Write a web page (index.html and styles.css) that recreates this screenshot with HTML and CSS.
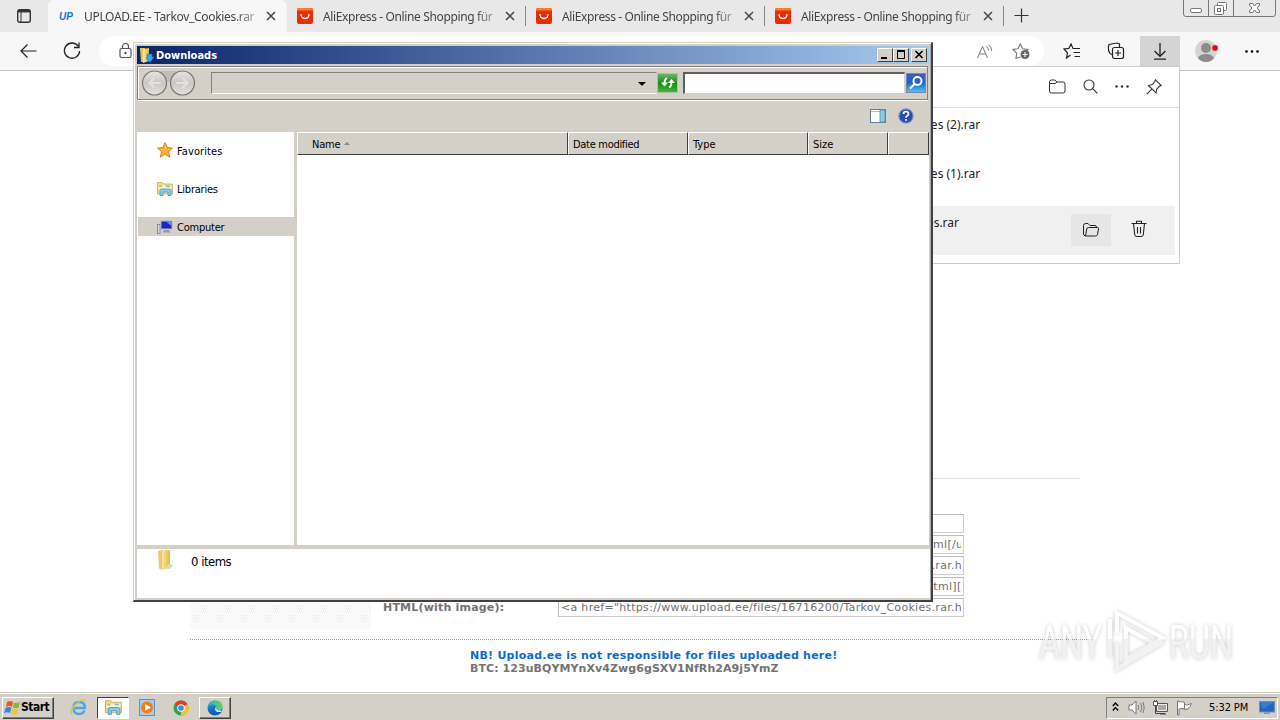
FILE: index.html
```html
<!DOCTYPE html>
<html lang="en">
<head>
  <meta charset="UTF-8">
  <title>UPLOAD.EE - Tarkov_Cookies.rar</title>
  <link rel="stylesheet" href="styles.css">
</head>
<body>

  <!-- shared icons -->
  <svg class="defs" width="0" height="0">
    <defs>
      <linearGradient id="gold" x1="0" x2="1"><stop offset="0" stop-color="#f8e89c"/><stop offset="1" stop-color="#e2b93c"/></linearGradient>
      <linearGradient id="edgeBlue" x1="0" y1="0" x2="0" y2="1"><stop offset="0" stop-color="#24a9e0"/><stop offset="1" stop-color="#0b50a4"/></linearGradient>
      <linearGradient id="edgeGreen" x1="0" x2="1"><stop offset="0" stop-color="#28a8dc"/><stop offset="1" stop-color="#65d84e"/></linearGradient>
      <symbol id="close" viewBox="0 0 10 10"><path d="M1 1l8 8M9 1l-8 8" stroke="#444" stroke-width="1.5" fill="none"/></symbol>
      <symbol id="ali" viewBox="0 0 16 16">
        <rect width="16" height="16" rx="2" fill="#e62e04"/>
        <path d="M0 2.500V2q0-2 2-2h12q2 0 2 2v.5z" fill="#f9801c"/>
        <path d="M4 6q0 4.500 4 4.500T12 6" stroke="#fff" stroke-width="1.300" fill="none"/>
      </symbol>
      <symbol id="library" viewBox="0 0 16 16">
        <path d="M.5 1.500h5L7 3h8.500v10H.5z" fill="#f0d98a" stroke="#c9ae5c" stroke-width=".8"/>
        <path d="M1.500 4.500h13v4h-13z" fill="#fbf3c4"/>
        <path d="M2 4.500h3V6H2z" fill="#8cc77a"/><path d="M9 4.500h4V6H9z" fill="#7db8da"/>
        <path d="M3 14.500V9.500Q3 8 4.500 8h8Q14 8 14 9.500v5h-3V11H6v3.500z" fill="#8accea" stroke="#4d96bf" stroke-width=".8"/>
      </symbol>
    </defs>
  </svg>

  <div class="browser">
    <div class="tabstrip">
      <div class="tab-actions">
        <svg width="14" height="14" viewBox="0 0 14 14" fill="none" stroke="#333" stroke-width="1.400"><rect x=".7" y=".7" width="12.600" height="12.600" rx="2"/><path d="M1 2.200h12" stroke-width="2.500"/><path d="M4 3v10" stroke-width="1"/></svg>
      </div>
      <div class="tab active">
        <span class="up-logo">UP</span>
        <span class="tab-title first">UPLOAD.EE - Tarkov_Cookies.rar</span>
        <svg class="tab-close"><use href="#close"/></svg>
      </div>
      <div class="tab">
        <svg class="favicon"><use href="#ali"/></svg>
        <span class="tab-title">AliExpress - Online Shopping für</span>
        <svg class="tab-close"><use href="#close"/></svg>
      </div>
      <div class="tab">
        <svg class="favicon"><use href="#ali"/></svg>
        <span class="tab-title">AliExpress - Online Shopping für</span>
        <svg class="tab-close"><use href="#close"/></svg>
      </div>
      <div class="tab">
        <svg class="favicon"><use href="#ali"/></svg>
        <span class="tab-title">AliExpress - Online Shopping für</span>
        <svg class="tab-close"><use href="#close"/></svg>
      </div>
      <svg class="new-tab" width="15" height="15" viewBox="0 0 15 15"><path d="M7.500 0.500v14M.5 7.500h14" stroke="#333" stroke-width="1.200"/></svg>
      <svg class="win-controls" width="94" height="17" viewBox="0 0 94 17" fill="none" stroke="#777">
        <path d="M.5 0v14q0 2.500 2.500 2.500h87q2.500 0 2.500-2.500V0M25.500 0v16M50.500 0v16"/>
        <rect x="7.500" y="8.500" width="11" height="4" rx="1.500" fill="#fff"/>
        <rect x="34.500" y="2.500" width="9" height="8" rx="1" fill="#fff"/><rect x="31.500" y="5.500" width="9" height="9" rx="1" fill="#fff"/><rect x="34.500" y="8.500" width="3" height="3"/>
        <path d="M66.500 3.500h3l2 2.500 2-2.500h3v1.500L74 8l2.500 3v1.500h-3l-2-2.500-2 2.500h-3V11L69 8l-2.500-3z" fill="#fff"/>
      </svg>
    </div>

    <div class="toolbar">
      <svg class="back" width="17" height="14" viewBox="0 0 17 14" fill="none" stroke="#222" stroke-width="1.200"><path d="M16.500 7H1M7.500.5L1 7l6.500 6.500"/></svg>
      <svg class="reload" width="18" height="18" viewBox="0 0 18 18" fill="none" stroke="#222" stroke-width="1.300"><path d="M15.200 4.200A7.600 7.600 0 1 0 16.600 9M16 .5v5h-5"/></svg>
      <div class="address">
        <svg width="13" height="16" viewBox="0 0 13 16" fill="none" stroke="#555" stroke-width="1.200"><rect x="1" y="5.500" width="11" height="9" rx="1.500"/><path d="M3.500 5.500V3.500a3 3 0 0 1 6 0v2"/><circle cx="6.500" cy="10" r=".6" fill="#555"/></svg>
        <span class="address-gap"></span>
        <svg width="17" height="15" viewBox="0 0 17 15" fill="none" stroke="#777"><path d="M.5 14L5.500 2.500 10.500 14M2.500 10h6M9.500 2.500q2 1.500 2 4M11.500.8q3.200 2.200 3.200 6"/></svg>
        <svg class="fav-add" width="18" height="18" viewBox="0 0 18 18" fill="none" stroke="#777" stroke-width="1.100"><path d="M8.500 15L4 16.200l.7-5L1 7.500l5-.8L8.300 2l2.400 4.700 5.300.8-2 2"/><circle cx="13" cy="12.500" r="4.500" fill="#666" stroke="none"/><path d="M13 10v5M10.500 12.500h5" stroke="#fff"/></svg>
      </div>
      <div class="tool"><svg width="18" height="16" viewBox="0 0 18 16" fill="none" stroke="#222" stroke-width="1.200"><path d="M7.500 12L3.500 15l1-5L1 6l4.800-.6L8 1l2 4.500h7M10.500 9.500h6.500M11.500 13.500h5.500"/></svg></div>
      <div class="tool"><svg width="18" height="18" viewBox="0 0 18 18" fill="none" stroke="#222" stroke-width="1.200"><path d="M5 12.500q-3-1-3.500-4.500Q1 5 2 2.500L10 1l2.500 1v3"/><rect x="5.500" y="5.500" width="11" height="11" rx="2"/><path d="M11 8v6M8 11h6"/></svg></div>
      <div class="tool pressed"><svg width="14" height="17" viewBox="0 0 14 17" fill="none" stroke="#222" stroke-width="1.300"><path d="M7 0v13M1.500 8L7 13.300 12.500 8M1 16.200h12"/></svg></div>
      <svg class="avatar" width="24" height="24" viewBox="0 0 24 24"><circle cx="11" cy="12" r="11" fill="#d6d4d2"/><circle cx="11" cy="9" r="5" fill="#8c8c8c"/><path d="M3 19q2-4 8-4t8 4q-3 4-8 4t-8-4z" fill="#8c8c8c"/><circle cx="20" cy="9" r="3.200" fill="#d90b16" stroke="#f4f4f4" stroke-width=".5"/></svg>
      <svg class="more" width="14" height="3" viewBox="0 0 14 3"><circle cx="1.500" cy="1.500" r="1.300"/><circle cx="7" cy="1.500" r="1.300"/><circle cx="12.500" cy="1.500" r="1.300"/></svg>
    </div>

    <div class="page">
      <div class="content">
        <div class="rule"></div>
        <div class="links">
          <div class="pattern">
            <svg width="181" height="30"><defs><pattern id="dots" width="24" height="30" patternUnits="userSpaceOnUse"><path d="M3 16.500h6M4 18.500h6M3 20.500h6M4 22.500h6M11 7.500h6M12 9.500h6M11 11.500h6M12 13.500h6" stroke="#e6e6e6" stroke-dasharray="1 1"/></pattern></defs><rect width="181" height="30" fill="url(#dots)"/></svg>
          </div>
          <div class="link-label">HTML(with image):</div>
          <div class="link-fields">
            <div class="field"></div>
            <div class="field"><span>[url]https://www.upload.ee/files/16716200/Tarkov_Cookies.rar.html[/url]</span></div>
            <div class="field"><span>&lt;a href="https://www.upload.ee/files/16716200/Tarkov_Cookies.rar.html</span></div>
            <div class="field"><span>[url=https://www.upload.ee/files/16716200/Tarkov_Cookies.rar.html][img]</span></div>
            <div class="field"><span>&lt;a href="https://www.upload.ee/files/16716200/Tarkov_Cookies.rar.html</span></div>
          </div>
        </div>
        <div class="footer">
          <div class="notice">NB! Upload.ee is not responsible for files uploaded here!</div>
          <div class="btc">BTC: 123uBQYMYnXv4Zwg6gSXV1NfRh2A9j5YmZ</div>
        </div>
      </div>
    </div>
  </div>

  <div class="flyout">
    <div class="flyout-header">
      <svg width="17" height="15" viewBox="0 0 17 15" fill="none" stroke="#333"><path d="M.5 12V3q0-2 2-2h3.500l2 2H14q2 0 2 2v7q0 2-2 2H2.500q-2 0-2-2zM.5 4.500H6L8 3"/></svg>
      <svg width="15" height="15" viewBox="0 0 15 15" fill="none" stroke="#333" stroke-width="1.100"><circle cx="6" cy="6" r="5"/><path d="M9.700 9.700l4.600 4.600"/></svg>
      <svg width="14" height="3" viewBox="0 0 14 3" fill="#333"><circle cx="1.500" cy="1.500" r="1.200"/><circle cx="7" cy="1.500" r="1.200"/><circle cx="12.500" cy="1.500" r="1.200"/></svg>
      <svg width="16" height="16" viewBox="0 0 16 16" fill="none" stroke="#333" stroke-width="1.100"><path d="M9.500.8l5.700 5.700-1.700.8-2.700 2.700-.8 4-7.500-7.500 4-1L8.500 3zM5.800 10.200L.8 15.200"/></svg>
    </div>
    <div class="download">Tarkov_Cookies (2).rar</div>
    <div class="download">Tarkov_Cookies (1).rar</div>
    <div class="download selected">
      <span class="download-name">Tarkov_Cookies.rar</span>
      <span class="open-folder"><svg width="16" height="14" viewBox="0 0 16 14" fill="none" stroke="#222"><path d="M2.500 13Q.5 12.500.5 11V2.500q0-2 2-2H5l2 2h5q1.500 0 1.500 2M2.500 13l1.200-7q.3-1.500 1.800-1.500h9q1.300 0 1 1.500l-1 5.500q-.3 1.500-2 1.500z"/></svg></span>
      <svg class="trash" width="16" height="18" viewBox="0 0 16 18" fill="none" stroke="#222" stroke-width="1.100"><path d="M.5 3.500h15M5.500 3.500V1.200h5v2.300M2.500 3.500l1.200 11q.2 2 2 2h4.600q1.800 0 2-2l1.200-11M6.500 7v6.500M9.500 7v6.500"/></svg>
    </div>
  </div>

  <div class="explorer">
    <div class="titlebar">
      <svg width="16" height="16" viewBox="0 0 16 16"><path d="M1 1h5v14H2z" fill="#e5c35a"/><path d="M4 2l6-1v13l-6 2z" fill="url(#gold)"/><path d="M8 7h5v3h2l-4 5.500L7 11h1z" fill="#36a4ee" stroke="#1470bd" stroke-width=".6"/></svg>
      <span class="title">Downloads</span>
      <span class="caption-btn"><svg width="10" height="9"><path d="M1 8h6" stroke="#000" stroke-width="2"/></svg></span>
      <span class="caption-btn"><svg width="10" height="9"><path d="M1.500 1v7.500h7V1M1 1h8" fill="none" stroke="#000"/><path d="M1 1h8" stroke="#000" stroke-width="2"/></svg></span>
      <span class="caption-btn last"><svg width="10" height="9"><path d="M1.500 1l7 7M8.500 1l-7 7" stroke="#000" stroke-width="1.600"/></svg></span>
    </div>
    <div class="navbar">
      <svg class="nav-arrows" width="54" height="26" viewBox="0 0 54 26">
        <defs><linearGradient id="round" x1="0" y1="0" x2="0" y2="1"><stop offset="0" stop-color="#e6e5e3"/><stop offset=".5" stop-color="#c9c7c4"/><stop offset="1" stop-color="#e3e2df"/></linearGradient></defs>
        <path d="M13 1h28v13q-14-4-28 0z" fill="#c0bdb8"/>
        <circle cx="12.500" cy="13" r="12" fill="url(#round)" stroke="#777" stroke-width="1.200"/>
        <circle cx="40.500" cy="13" r="12" fill="url(#round)" stroke="#777" stroke-width="1.200"/>
        <path d="M19 13H7M12.500 8l-5 5 5 5M34 13h12M40.500 8l5 5-5 5" fill="none" stroke="#e2e1df" stroke-width="2.200"/>
      </svg>
      <div class="path"><span class="drop"></span></div>
      <div class="refresh"><svg width="18" height="16" viewBox="0 0 18 16" fill="none" stroke="#fff" stroke-width="1.800"><path d="M8 3Q5.500 4 5.500 8M10 12.500q2.500-1 2.500-5"/><path d="M2 7.500h7L5.500 11.500zM9 8h7l-3.500-4z" fill="#fff" stroke="none"/></svg></div>
      <div class="search"></div>
      <div class="search-btn"><svg width="16" height="16" viewBox="0 0 16 16" fill="none" stroke="#fff" stroke-width="2"><circle cx="9.500" cy="6" r="4"/><path d="M6.500 9L2 13.500"/></svg></div>
    </div>
    <div class="commands">
      <svg width="16" height="14" viewBox="0 0 16 14"><rect x=".5" y=".5" width="15" height="13" fill="#fff" stroke="#5d7e9c"/><path d="M1 2.500h9" stroke="#a4bdd0"/><rect x="10" y="1" width="5" height="12" fill="#8ccbe2" stroke="#4b94b5" stroke-width=".8"/></svg>
      <svg width="16" height="16" viewBox="0 0 16 16"><circle cx="8" cy="8" r="7.200" fill="#2b4fb0" stroke="#8896bf" stroke-width="1.200"/><path d="M5.500 6q0-2.500 2.500-2.500T10.500 6q0 1.200-1.500 2-1 .6-1 1.700M8 11v1.800" fill="none" stroke="#fff" stroke-width="1.700"/></svg>
    </div>
    <div class="panes">
      <div class="sidebar">
        <div class="place"><svg class="star" width="16" height="16" viewBox="0 0 16 16"><path d="M8 .6l2.200 5 5.300.5-4 3.600 1.200 5.400L8 12.300l-4.700 2.800 1.200-5.400-4-3.600 5.300-.5z" fill="#fbb634" stroke="#d6791c" stroke-width=".9"/><path d="M8 3l1.400 3.700H8z" fill="#ffe79a"/></svg><span>Favorites</span></div>
        <div class="place"><svg width="16" height="16"><use href="#library"/></svg><span>Libraries</span></div>
        <div class="place current"><svg width="16" height="14" viewBox="0 0 16 14"><rect x=".5" y="4.500" width="2.500" height="9" fill="#dcdfe2" stroke="#889"/><path d="M4 1h11v8H4z" fill="#1a27b8" stroke="#a8b2c4"/><path d="M9 1.500h5.500V6z" fill="#6d8cf0"/><path d="M7 10h5l1.500 2.500h-8z" fill="#8f99a8"/></svg><span>Computer</span></div>
      </div>
      <div class="files">
        <div class="columns">
          <div class="col name">Name <span class="sort"></span></div>
          <div class="col date">Date modified</div>
          <div class="col">Type</div>
          <div class="col size">Size</div>
          <div class="col rest"></div>
        </div>
      </div>
    </div>
    <div class="details">
      <svg width="18" height="21" viewBox="0 0 18 21"><path d="M1 1l5-1v20l-4-1.500z" fill="#e6c878"/><path d="M5 2l3-2h5v17l-8 3z" fill="url(#gold)"/><path d="M12 14l4 1-3 4-5 0z" fill="#dcd9c4"/></svg>
      <span>0 items</span>
    </div>
  </div>

  <svg class="watermark" width="210" height="74" viewBox="0 0 210 74">
    <defs><linearGradient id="fade" gradientUnits="userSpaceOnUse" x1="0" y1="0" x2="0" y2="74"><stop offset=".47" stop-color="#fff"/><stop offset=".47" stop-color="#f0f0f0"/></linearGradient></defs>
    <g class="brand" fill="url(#fade)">
      <text x="4" y="55" textLength="63" lengthAdjust="spacingAndGlyphs">ANY</text>
      <text x="134" y="55" textLength="64" lengthAdjust="spacingAndGlyphs">RUN</text>
    </g>
    <path d="M75 53V15M82 29V9l46 25-37 21v-6M82 39v26l46-27M91 55V24l30 17" fill="none" stroke="url(#fade)" stroke-width="4"/>
  </svg>

  <div class="taskbar">
    <div class="start">
      <svg width="17" height="16" viewBox="0 0 17 16"><path d="M3 2q3-2 6 0L8 7Q5 5 2 7z" fill="#e65b25"/><path d="M10 2.500q3 1.500 6-.5l-1.500 5.500Q12 9 9 7.500z" fill="#7cb83a"/><path d="M1.500 8q3-2 6 0L6 13q-3-1.500-6 .3z" fill="#3c83d2"/><path d="M8.500 8.500q3 1.500 6 0L13 14q-3 1.500-6-.5z" fill="#f8c22d"/></svg>
      <span>Start</span>
    </div>
    <div class="task"><svg width="18" height="17" viewBox="0 0 18 17" fill="none"><path d="M14.500 11.500Q13 15 9 15q-5.500 0-5.500-6T9 3q6 0 6 6H5" stroke="#4aa9dd" stroke-width="2.300"/><path d="M2 15.500Q-1 12 5 6q7-7 11-4.500" stroke="#e9bd43" stroke-width="1.400"/></svg></div>
    <div class="task open"><svg width="17" height="17"><use href="#library"/></svg></div>
    <div class="task"><svg width="16" height="17" viewBox="0 0 16 17"><rect x=".5" y=".5" width="15" height="16" fill="#a5cceb" stroke="#6293bd"/><circle cx="8" cy="8.500" r="6" fill="#f17e16"/><path d="M6 5l6 3.500L6 12z" fill="#fff"/></svg></div>
    <div class="task"><svg width="16" height="16" viewBox="0 0 17 17"><circle cx="8.500" cy="8.500" r="8" fill="#34a350"/><path d="M8.500 8.500L1.600 4.500A8 8 0 0 1 15.500 4.500z" fill="#e33b2e"/><path d="M8.500 8.500L15.500 4.500A8 8 0 0 1 8.500 16.500z" fill="#f9c513"/><circle cx="8.500" cy="8.500" r="4" fill="#fff"/><circle cx="8.500" cy="8.500" r="3" fill="#4285f4"/></svg></div>
    <div class="task raised"><svg width="16" height="16" viewBox="0 0 17 17"><circle cx="8.500" cy="8.500" r="8" fill="url(#edgeBlue)"/><path d="M.6 8Q1.500.5 8.500.5q8 0 8 6.500 0 4-4.500 4-3 0-2-2 .8-3-3-4Q3 4 .6 8z" fill="url(#edgeGreen)"/><path d="M7 8q-1 5 5 5.500 2 0 4-1-3 4-7 3.500Q3.500 12 7 8z" fill="#1565b4"/><path d="M9.500 7.500q1 1 .5 2.500 1 1.500 4 .8l2 1.400q-3 1.300-6 0-2.500-2-.5-4.700z" fill="#d9eef4"/></svg></div>
    <div class="tray">
      <svg class="chevrons" width="7" height="10" viewBox="0 0 7 10" fill="none" stroke="#000" stroke-width="1.300"><path d="M.8 4l2.700-3 2.700 3M.8 8.500l2.700-3 2.700 3"/></svg>
      <svg class="volume" width="17" height="15" viewBox="0 0 17 15" fill="none" stroke="#777"><path d="M1 5h3l4-4v13l-4-4H1z" fill="#fff"/><path d="M10 5q1.500 2.500 0 5M12.500 3q3 4.500 0 9M15 2q2.500 5.500 0 11"/></svg>
      <svg width="17" height="15" viewBox="0 0 17 15" fill="none" stroke="#555"><path d="M4.500 3.500h11v8h-11z" fill="#aaa9a7"/><path d="M5.500 4.500h9v6h-9z" stroke="#eee"/><path d="M3.500 5v8.500H13M8 14h6" stroke="#444"/><path d="M1.500 1.500h4v4h-4zM2.500 0v1.500M4.500 0v1.500" fill="#fff"/></svg>
      <svg width="17" height="16" viewBox="0 0 17 16" fill="#fff" stroke="#777"><path d="M8 4.500q3 1.500 7.500-1-1 3-3.500 5.500-2 1-4 0z"/><path d="M1.500 1v14h1.500V9q3-1 5.500 0V2.500Q6 1 3 2V1z"/></svg>
      <span class="clock">5:32 PM</span>
      <svg class="show-desktop" width="16" height="14" viewBox="0 0 16 14"><rect x=".5" y=".5" width="15" height="10.500" fill="#2466bd" stroke="#6d8fb5"/><path d="M1 1h14L4 8z" fill="#3a7dcc"/><path d="M5 11.500h6V13H5z" fill="#8795a3"/></svg>
    </div>
  </div>

</body>
</html>
```
FILE: styles.css
```css
* {
  box-sizing: border-box;
}

body {
  margin: 0;
  width: 1280px;
  height: 720px;
  overflow: hidden;
  position: relative;
  display: flex;
  flex-direction: column;
  background: #fff;
  color: #000;
  font-family: "DejaVu Sans Condensed", "DejaVu Sans", sans-serif;
  font-size: 11px;
}

svg {
  display: block;
  flex: none;
}

.defs {
  position: absolute;
}

.browser {
  height: 692px;
  display: flex;
  flex-direction: column;
}

/* tabs */
.tabstrip {
  height: 32px;
  display: flex;
  background: #e8e8e8;
  font-family: "Noto Sans", sans-serif;
  font-size: 12px;
  color: #444;
}

.tab-actions {
  width: 48px;
  padding: 9px 0 0 17px;
}

.tab {
  width: 239px;
  height: 32px;
  padding: 0 10px;
  display: flex;
  align-items: center;
  position: relative;
}

.tab::after {
  content: "";
  width: 1px;
  height: 20px;
  background: #888;
  position: absolute;
  right: 0;
  top: 6px;
}

.tab.active {
  background: #f7f7f7;
  border-radius: 6px 6px 0 0;
}

.tab.active::after {
  display: none;
}

.favicon {
  width: 16px;
  height: 16px;
}

.up-logo {
  width: 16px;
  padding-left: 1px;
  color: #1a73d9;
  font: italic bold 10px "Liberation Sans", sans-serif;
}

.tab-title {
  width: 172px;
  margin-left: 10px;
  white-space: nowrap;
  letter-spacing: -0.37px;
  mask-image: linear-gradient(90deg, #000 150px, rgba(0, 0, 0, 0.45) 170px);
}

.tab-title.first {
  letter-spacing: -0.32px;
}

.tab-close {
  width: 10px;
  height: 10px;
  margin-left: 10px;
}

.new-tab {
  margin: 8px 0 0 10px;
}

.win-controls {
  margin-left: 154px;
}

/* address bar */
.toolbar {
  height: 39px;
  display: flex;
  align-items: center;
  background: #f7f7f7;
  border-bottom: 1px solid #c4c4c4;
}

.back {
  margin-left: 20px;
}

.reload {
  margin-left: 26px;
}

.address {
  width: 945px;
  height: 30px;
  margin: 0 8px 0 18px;
  padding: 0 14px 0 20px;
  display: flex;
  align-items: center;
  border-radius: 15px;
  background: #fff;
}

.address-gap {
  flex: 1;
}

.fav-add {
  margin-left: 18px;
}

.tool {
  width: 40px;
  height: 30px;
  margin-right: 4px;
  display: flex;
  align-items: center;
  justify-content: center;
}

.tool.pressed {
  background: #d4d4d4;
}

.avatar {
  margin-left: 11px;
}

.more {
  margin-left: 26px;
}

/* upload page */
.page {
  flex: 1;
  display: flex;
  padding: 407px 0 0 190px;
  font-family: "DejaVu Sans", sans-serif;
}

.content {
  width: 901px;
}

.rule {
  width: 890px;
  height: 1px;
  background: #e2e2e2;
}

.links {
  height: 161px;
  display: flex;
  border-bottom: 1px dotted #999;
}

.pattern {
  width: 181px;
  height: 150px;
  padding-top: 120px;
  background: #f9f9f9;
}

.link-label {
  width: 175px;
  margin: 122px 0 0 12px;
  font-weight: bold;
  letter-spacing: 0.2px;
  color: #737373;
}

.link-fields {
  width: 406px;
  padding-top: 35px;
  display: flex;
  flex-direction: column;
  gap: 2px;
}

.field {
  height: 19px;
  padding: 2px 2px 0;
  border: 1px solid;
  border-color: #bbb #ccc #ccc #bbb;
  line-height: 14px;
  letter-spacing: 0.3px;
  white-space: nowrap;
  color: #707070;
}

.field span {
  display: block;
  overflow: hidden;
}

.footer {
  padding: 9px 0 0 280px;
  font-weight: bold;
  line-height: 13px;
  color: #737373;
  white-space: nowrap;
}

.notice {
  color: #0e6bd0;
  letter-spacing: 0.24px;
}

.btc {
  letter-spacing: 0.07px;
}

/* downloads flyout */
.flyout {
  position: absolute;
  left: 820px;
  top: 66px;
  width: 360px;
  height: 198px;
  background: #fff;
  border: 1px solid #ccc;
  font: 12px "Noto Sans", sans-serif;
  color: #222;
}

.flyout-header {
  height: 41px;
  padding: 0 17px 1px 0;
  display: flex;
  align-items: center;
  justify-content: flex-end;
  gap: 17px;
  border-bottom: 1px solid #ddd;
}

.download {
  height: 49px;
  padding: 8px 4px 0 36px;
}

.download.selected {
  display: flex;
  margin-right: 4px;
  padding-left: 32px;
  background: #f0f0f0;
}

.download-name {
  flex: 1;
}

.open-folder {
  width: 40px;
  height: 32px;
  margin-right: 20px;
  display: flex;
  align-items: center;
  justify-content: center;
  background: #e6e6e6;
}

.trash {
  margin: 6px 24px 0 0;
}

/* explorer window */
.explorer {
  position: absolute;
  left: 133px;
  top: 42px;
  width: 800px;
  height: 560px;
  padding: 2px 2px 1px 3px;
  display: flex;
  flex-direction: column;
  background: #d4d0c8;
  border: 1px solid #d4d0c8;
  border-right: 2px solid #404040;
  border-bottom: 2px solid #404040;
  box-shadow: inset 1px 1px #fff, inset -1px 0 #aaa;
}

.titlebar {
  width: 792px;
  height: 18px;
  margin-top: 1px;
  padding: 0 2px;
  display: flex;
  align-items: center;
  background: linear-gradient(90deg, #0a246a, #a6caf0);
}

.title {
  flex: 1;
  padding-left: 1px;
  color: #fff;
  font-weight: bold;
}

.caption-btn {
  width: 16px;
  height: 14px;
  padding: 1px 2px;
  background: #d4d0c8;
  border: 1px solid;
  border-color: #fff #404040 #404040 #fff;
}

.caption-btn.last {
  margin-left: 2px;
}

.navbar {
  width: 791px;
  height: 34px;
  margin-top: 2px;
  display: flex;
  align-items: center;
  padding-left: 4px;
  border: 1px solid #808080;
  box-shadow: inset 1px 1px #fff, 0 1px #fff;
}

.path {
  width: 446px;
  height: 22px;
  margin-left: 15px;
  padding: 9px 10px 0 0;
  border: 1px solid;
  border-color: #808080 transparent #fff #808080;
}

.drop {
  display: block;
  margin-left: auto;
  width: 8px;
  border: 4px solid transparent;
  border-top-color: #000;
  border-bottom: 0;
}

.refresh {
  width: 21px;
  height: 20px;
  padding: 1px;
  border: 1px solid #a9c4a4;
  background: linear-gradient(#65b95c, #168c17 50%, #43b535);
}

.search {
  width: 222px;
  height: 22px;
  margin-left: 5px;
  background: #fff;
  border: 1px solid #d4d0c8;
  border-top: 2px solid #606060;
  border-left: 2px solid #606060;
}

.search-btn {
  width: 20px;
  height: 20px;
  margin-left: 1px;
  padding: 1px;
  border: 1px solid #7488b6;
  background: linear-gradient(#3e56cc, #1f66c9 50%, #4cc4ef);
}

.commands {
  height: 32px;
  padding-right: 15px;
  display: flex;
  align-items: center;
  justify-content: flex-end;
  gap: 12px;
}

.panes {
  height: 413px;
  display: flex;
}

.sidebar {
  width: 158px;
  padding: 9px 0 0 1px;
  background: #fff;
}

.place {
  height: 19px;
  margin-bottom: 19px;
  padding-left: 19px;
  display: flex;
  align-items: center;
  gap: 4px;
}

.star {
  margin-top: -2px;
}

.place span {
  padding-top: 1px;
  letter-spacing: -0.22px;
}

.place:first-child span {
  letter-spacing: 0.1px;
}

.place.current {
  background: #d4d0c8;
}

.files {
  width: 632px;
  margin-left: 3px;
  background: #fff;
}

.columns {
  height: 23px;
  display: flex;
}

.col {
  width: 120px;
  padding: 5px 0 0 4px;
  background: #d4d0c8;
  border: 1px solid;
  border-color: #fff #404040 #404040 #fff;
  white-space: nowrap;
}

.col.name {
  width: 271px;
  padding-left: 14px;
  letter-spacing: -0.2px;
}

.col.date {
  letter-spacing: -0.3px;
}

.sort {
  display: inline-block;
  margin-left: 1px;
  vertical-align: 3px;
  border: 3px solid transparent;
  border-bottom-color: #888;
  border-top: 0;
}

.col.size {
  width: 80px;
}

.col.rest {
  width: 41px;
}

.details {
  width: 793px;
  height: 49px;
  margin-top: 4px;
  padding: 1px 0 0 20px;
  display: flex;
  background: #fff;
  font-size: 13px;
}

.details span {
  margin: 4px 0 0 16px;
  letter-spacing: -0.5px;
}

/* watermark over the desktop */
.watermark {
  position: absolute;
  left: 1035px;
  top: 604px;
  opacity: 0.85;
  filter: drop-shadow(0 0 2px rgba(0, 0, 0, 0.25));
}

.brand {
  font: 400 49px Roboto, sans-serif;
}

/* taskbar */
.taskbar {
  height: 28px;
  padding: 2px 2px 0;
  display: flex;
  align-items: center;
  background: #d4d0c8;
  border-top: 1px solid #d4d0c8;
  box-shadow: inset 0 1px #fff;
}

.start {
  width: 52px;
  height: 22px;
  padding-left: 1px;
  display: flex;
  align-items: center;
  border: 1px solid;
  border-color: #fff #404040 #404040 #fff;
  box-shadow: inset -1px -1px #808080;
  font-weight: bold;
  font-size: 12px;
  letter-spacing: -0.5px;
}

.start span {
  margin-top: -1px;
}

.task {
  width: 32px;
  height: 22px;
  margin-right: 2px;
  display: flex;
  align-items: center;
  justify-content: center;
}

.start + .task {
  margin-left: 9px;
}

.task.open {
  background: #fff;
  border: 1px solid;
  border-color: #404040 #fff #fff #404040;
}

.task.raised {
  border: 1px solid;
  border-color: #fff #404040 #404040 #fff;
  box-shadow: inset -1px -1px #808080;
}

.tray {
  width: 172px;
  height: 22px;
  margin-left: auto;
  padding-left: 5px;
  display: flex;
  align-items: center;
  gap: 7px;
  border: 1px solid;
  border-color: #808080 #fff #fff #808080;
}

.chevrons {
  margin-top: -2px;
}

.volume {
  margin-left: 2px;
}

.clock {
  width: 42px;
  margin-left: 9px;
  letter-spacing: -0.1px;
  white-space: nowrap;
}

.show-desktop {
  margin-left: 1px;
}
```
